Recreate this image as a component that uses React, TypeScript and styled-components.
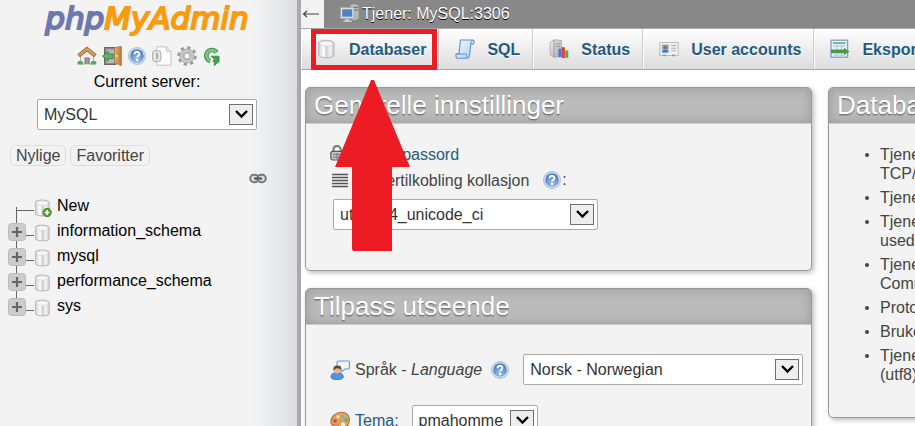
import React from 'react';
import styled, { createGlobalStyle } from 'styled-components';

const GlobalStyle = createGlobalStyle`
  *, *::before, *::after { box-sizing: border-box; }
  html, body, #root { height: 100%; }
  body {
    margin: 0;
    overflow: hidden;
    background: #fff;
    color: #444;
    font: 16px/19px "Liberation Sans", Arial, sans-serif;
  }
  a { color: #235a81; text-decoration: none; }
  h1, h2, ul, p { margin: 0; padding: 0; font-weight: normal; }
  ul { list-style: none; }
  svg { display: block; flex: none; }
`;

/* ---------- layout ---------- */

const Page = styled.div`
  display: flex;
  min-height: 100vh;
`;

const Sidebar = styled.aside`
  flex: 0 0 301px;
  padding-right: 3px;
  border-right: 4px solid #aaa;
  background: linear-gradient(to right, #f3f3f3 250px, #e9eaec 275px, #dadde1 297px);
  color: #000;
`;

const Main = styled.main`
  flex: 1;
  min-width: 0;
  height: 100vh;
  overflow: hidden;
`;

/* ---------- sidebar ---------- */

const Logo = styled.a`
  display: block;
  height: 42px;
  font: italic 31px/37px "DejaVu Sans", Verdana, sans-serif;
  text-align: center;
  color: #f89c0e;
  -webkit-text-stroke: 2px currentColor;
  text-shadow: 0 0 2px #fff, 1px 1px 1px #d8d8d8;
`;

const LogoPrefix = styled.span`
  color: #6c78af;
`;

const IconLinks = styled.nav`
  display: flex;
  justify-content: center;
  gap: 5px;
  padding: 4px 0 0 4px;
  a { display: block; }
`;

const ServerForm = styled.form`
  display: flex;
  flex-direction: column;
  align-items: center;
  gap: 8px;
  padding-top: 6px;
`;

const QuickButtons = styled.div`
  display: flex;
  gap: 4px;
  padding: 15px 0 0 10px;
`;

const QuickButton = styled.button`
  height: 21px;
  padding: 0 5px;
  border: 1px solid #ddd;
  border-radius: 5px;
  background: #f2f2f2;
  color: #444;
  font: inherit;
  line-height: 18px;
`;

const LinkToggle = styled.button`
  display: block;
  margin: 7px 27px 0 auto;
  padding: 0;
  border: 0;
  background: none;
`;

const Tree = styled.ul`
  padding: 9px 0 0 8px;
`;

const TreeRow = styled.li`
  display: flex;
  align-items: center;
  height: 25px;
  a { color: #000; margin-left: 5px; padding-bottom: 1px; }
`;

/* ---------- select ---------- */

const SelectBox = styled.span<{ $width: number }>`
  display: inline-grid;
  align-items: center;
  width: ${(p) => p.$width}px;
  height: 31px;
  select, svg { grid-area: 1 / 1; }
  select {
    appearance: none;
    width: 100%;
    height: 100%;
    padding: 0 28px 0 6px;
    border: 1px solid #aaa;
    border-radius: 2px;
    background: #fff;
    color: #333;
    font: inherit;
  }
  svg { justify-self: end; margin-right: 4px; pointer-events: none; }
`;

/* ---------- top bars ---------- */

const ServerBar = styled.header`
  display: flex;
  align-items: center;
  height: 29px;
  background: #888;
  border-bottom: 1px solid #aaa;
`;

const BackButton = styled.button`
  align-self: stretch;
  width: 23px;
  padding: 0 0 0 1px;
  border: 0;
  background: #f2f2f2;
  color: #444;
`;

const ServerLink = styled.a`
  display: flex;
  align-items: center;
  gap: 3px;
  margin-left: 16px;
  padding-bottom: 2px;
  color: #fff;
  text-shadow: 0 1px 0 #000;
`;

const TabBar = styled.nav`
  display: flex;
  height: 41px;
  border-bottom: 1px solid #aaa;
  background: linear-gradient(#fff, #dcdcdc);
`;

const Tab = styled.a`
  position: relative;
  display: flex;
  flex: none;
  align-items: center;
  gap: 12px;
  padding: 0 12px 0 15px;
  border-left: 1px solid #fff;
  border-right: 1px solid #ccc;
  font-weight: bold;
  text-shadow: 0 1px 0 #fff;
  white-space: nowrap;
`;

const Highlight = styled.span`
  position: absolute;
  z-index: 2;
  top: 0;
  left: 9px;
  width: 126px;
  height: 41px;
  border: 5px solid #ed1c24;
  pointer-events: none;
`;

const Pointer = styled.svg`
  position: absolute;
  z-index: 2;
  top: 51px;
  left: 33px;
  pointer-events: none;
`;

/* ---------- cards ---------- */

const Cards = styled.div`
  display: grid;
  grid-template-columns: minmax(507px, 3fr) minmax(320px, 2fr);
  align-items: start;
  gap: 16px;
  padding: 17px 4px;
`;

const Column = styled.div`
  display: grid;
  gap: 17px;
`;

const Card = styled.section<{ $bottom: number }>`
  overflow: hidden;
  padding-bottom: ${(p) => p.$bottom}px;
  border: 1px solid #999;
  border-radius: 5px;
  background: #f3f3f3;
  box-shadow: 2px 2px 5px #bbb;
`;

const CardTitle = styled.h2`
  height: 36px;
  padding-left: 8px;
  background: #bbb;
  box-shadow: inset 0 0 12px #999;
  border-bottom: 1px solid #ccc;
  color: #fff;
  font-size: 26px;
  line-height: 35px;
  text-shadow: 0 1px 0 #777, 0 2px 1px #999;
`;

const Settings = styled.div<{ $top: number; $gap: number }>`
  display: grid;
  gap: ${(p) => p.$gap}px;
  padding: ${(p) => p.$top}px 0 0 24px;
`;

const SettingRow = styled.div`
  display: flex;
  align-items: center;
  gap: 5px;
  min-height: 20px;
`;

const SelectRow = styled(SettingRow)`
  padding: 3px 0 0 3px;
`;

const Field = styled.span`
  display: flex;
  margin-left: 8px;
`;

const FieldLabel = styled.label`
  white-space: pre;
`;

const Help = styled.span<{ $gap: number }>`
  display: flex;
  margin-left: ${(p) => p.$gap}px;
`;

const Facts = styled.ul`
  display: grid;
  gap: 5px;
  padding: 21px 0 0 51px;
`;

const Fact = styled.li`
  position: relative;
  white-space: pre-line;
  &::before {
    content: "";
    position: absolute;
    left: -15px;
    top: 8px;
    width: 4px;
    height: 4px;
    border-radius: 50%;
    background: #444;
  }
`;

/* ---------- icons ---------- */

const GradientDefs = styled.svg`
  position: absolute;
`;

const Gradients = () => (
  <GradientDefs width="0" height="0" aria-hidden="true">
    <defs>
      <linearGradient id="cyl"><stop offset="0" stopColor="#d4d4d4" /><stop offset=".35" stopColor="#fff" /><stop offset=".5" stopColor="#ccc" /><stop offset=".75" stopColor="#f4f4f4" /><stop offset="1" stopColor="#ccc" /></linearGradient>
      <radialGradient id="help" cx=".5" cy=".75" r=".7"><stop offset="0" stopColor="#9fc4ee" /><stop offset="1" stopColor="#4677b8" /></radialGradient>
      <linearGradient id="door"><stop offset="0" stopColor="#e3b077" /><stop offset="1" stopColor="#b9793a" /></linearGradient>
      <linearGradient id="scroll" x2="1" y2="1"><stop offset="0" stopColor="#f6fbff" /><stop offset="1" stopColor="#a9cdf3" /></linearGradient>
      <linearGradient id="steel" x2="1" y2="1"><stop offset="0" stopColor="#f2f2f2" /><stop offset="1" stopColor="#a4a4a4" /></linearGradient>
    </defs>
  </GradientDefs>
);

const DbIcon = ({ size = 20, plus = false }: { size?: number; plus?: boolean }) => (
  <svg width={size} height={size} viewBox="0 0 20 20">
    <path d="M1.7 4.2C1.7 .3 16.8 .3 16.8 4.2V15.8C16.8 19.7 1.7 19.7 1.7 15.8Z" fill="url(#cyl)" stroke="#bdbdbd" strokeWidth="1.3" />
    <ellipse cx="9.3" cy="4.6" rx="6.4" ry="2.4" fill="#f7f7f7" stroke="#dedede" />
    {plus && (
      <>
        <circle cx="14.6" cy="15" r="4.6" fill="#55a432" stroke="#2f7a1c" />
        <path d="M14.6 12.3V17.7M11.9 15H17.3" stroke="#fff" strokeWidth="1.7" />
      </>
    )}
  </svg>
);

const HelpIcon = () => (
  <svg width="20" height="20" viewBox="0 0 20 20">
    <circle cx="10" cy="10" r="8.4" fill="#d5e3f5" stroke="#9fb9dc" />
    <circle cx="10" cy="10" r="6.8" fill="url(#help)" />
    <path d="M7.6 8.2C7.7 5 12.5 5.1 12.4 8C12.3 9.7 10.1 9.7 10.1 11.6" fill="none" stroke="#fff" strokeWidth="1.9" />
    <circle cx="10.1" cy="14" r="1.2" fill="#fff" />
  </svg>
);

const HomeIcon = () => (
  <svg width="20" height="20" viewBox="0 0 20 20">
    <path d="M3.5 9.5L10 4L16.5 9.5V18H3.5Z" fill="#eee" stroke="#aaa" strokeWidth=".8" />
    <path d="M8 18V12H12.2V18" fill="#999" stroke="#777" />
    <path d="M.7 16Q3 13.5 6 16V18.6H.4ZM14 16Q17 13.5 19.3 16V18.6H13.4Z" fill="#58a858" />
    <path d="M1.6 9.8L10 3L18.4 9.8" fill="none" stroke="#8e5f2e" strokeWidth="4" />
    <path d="M1.8 9.4L10 2.9L18.2 9.4" fill="none" stroke="#d29a5b" strokeWidth="2.5" />
  </svg>
);

const ExitIcon = () => (
  <svg width="20" height="20" viewBox="0 0 20 20">
    <path d="M2.5 1.5H14V18.5H2.5Z" fill="#8a8a8a" stroke="#666" />
    <path d="M4.5 3.5H12V17H4.5Z" fill="#b8b8b8" />
    <path d="M12.5 1.5L19.4 .5V19.6L12.5 17Z" fill="url(#door)" stroke="#a9703a" strokeWidth=".7" />
    <circle cx="14.6" cy="10" r=".9" fill="#fff2a0" />
    <path d="M.6 10.2L6 5.4V8H11V12.6H6V15Z" fill="#5fb66a" stroke="#2c7e3a" strokeWidth=".9" />
  </svg>
);

const DocIcon = () => (
  <svg width="20" height="20" viewBox="0 0 20 20">
    <path d="M4.5 .8H14.5L19 5.3V19.2H4.5Z" fill="#fcfcfc" stroke="#c3c3c3" />
    <path d="M14.5 .8V5.3H19" fill="#eee" stroke="#c3c3c3" />
    <rect x=".7" y="4.7" width="8.2" height="10.8" rx="2.4" fill="#e6e6e6" stroke="#ababab" />
    <path d="M4.8 7V13M5.4 7V13" stroke="#aaa" strokeWidth="1.3" />
  </svg>
);

const GearIcon = () => (
  <svg width="20" height="20" viewBox="0 0 20 20">
    <circle cx="10" cy="10" r="8" fill="none" stroke="#999" strokeWidth="3.4" strokeDasharray="3.14 3.14" />
    <circle cx="10" cy="10" r="5.4" fill="none" stroke="#ababab" strokeWidth="4.4" />
    <circle cx="10" cy="10" r="5.4" fill="none" stroke="#c9c9c9" strokeWidth="2.4" />
    <circle cx="10" cy="10" r="2.9" fill="#f3f3f3" stroke="#999" strokeWidth=".7" />
  </svg>
);

const ReloadIcon = () => (
  <svg width="20" height="20" viewBox="0 0 20 20">
    <path d="M14.6 6.6A5.6 5.6 0 1 0 8.2 15" fill="none" stroke="#3d8f4b" strokeWidth="4.6" />
    <path d="M14.3 6.4A5.4 5.4 0 1 0 8.4 14.6" fill="none" stroke="#76c482" strokeWidth="2.8" />
    <path d="M9 10.2H17V15.6L12.4 19.4V15.4H10.8L12.6 13.6Z" fill="#46a255" stroke="#2f7f3d" strokeWidth=".8" />
  </svg>
);

const ChainIcon = () => (
  <svg width="18" height="11" viewBox="0 0 18 11">
    <rect x="1.2" y="1.8" width="8.4" height="7.4" rx="3.7" fill="#ddd" stroke="#777" strokeWidth="2" />
    <rect x="8.4" y="1.8" width="8.4" height="7.4" rx="3.7" fill="#ddd" stroke="#777" strokeWidth="2" />
    <path d="M5 5.5H13" stroke="#555" strokeWidth="2.2" />
  </svg>
);

const ChevronBox = () => (
  <svg width="24" height="21" viewBox="0 0 24 21">
    <rect x=".5" y=".5" width="23" height="20" fill="#eee" stroke="#707070" />
    <path d="M7 7L12.5 12.5L18 7" fill="none" stroke="#000" strokeWidth="2.4" />
  </svg>
);

const TreeJoint = ({ first = false, last = false }: { first?: boolean; last?: boolean }) => (
  <svg width="26" height="25" viewBox="0 0 26 25">
    <path d={first ? 'M8.5 14V25' : last ? 'M8.5 0V8' : 'M8.5 0V25'} stroke="#666" />
    <path d="M8 17.5H26" stroke="#666" />
    {!first && (
      <>
        <rect x=".5" y="5.5" width="17" height="17" rx="3" fill="#ccc" stroke="#bbb" />
        <path d="M9 9V19M4 14H14" stroke="#666" strokeWidth="2.2" />
      </>
    )}
  </svg>
);

const TreeDb = styled.span`
  padding-top: 4px;
`;

const ServerIcon = () => (
  <svg width="19" height="20" viewBox="0 0 19 20">
    <path d="M10 1.5L15 .5L19 2V16L14 18L10 16Z" fill="#b9b9b9" stroke="#777" strokeWidth=".6" />
    <path d="M14 4.3H18M14 7H18" stroke="#666" />
    <circle cx="16" cy="14" r="1" fill="#7c7" />
    <rect x=".5" y="4.5" width="13.5" height="11" rx="1" fill="#ddd" stroke="#aaa" />
    <rect x="2.2" y="6.3" width="10" height="7.4" fill="#4f82c4" />
    <path d="M5.5 16H9V17.5H12V19H3.5V17.5H5.5Z" fill="#ccc" />
  </svg>
);

const SqlIcon = () => (
  <svg width="20" height="20" viewBox="0 0 20 20">
    <path d="M5.5 1H17.5Q20 1.5 18.5 5H15.8L14.5 17Q14 19.2 12 19.2H2Q.3 18 1.2 15H4Z" fill="url(#scroll)" stroke="#5d91cc" strokeWidth="1.1" />
    <path d="M15.8 5L16.3 2.5Q16.8 1.2 17.5 1M1.2 15H11.6Q11.5 18.3 12.4 19" fill="none" stroke="#5d91cc" />
  </svg>
);

const StatusIcon = () => (
  <svg width="20" height="20" viewBox="0 0 20 20">
    <path d="M1 3.5L5 .8L12.5 1.5V17L5 18.5L1 15.5Z" fill="url(#steel)" stroke="#aaa" strokeWidth=".8" />
    <path d="M5 .8V18M6.5 5H11M6.5 7.5H11" stroke="#999" />
    <rect x="9.4" y="9.8" width="3.1" height="8.4" fill="#4777e6" />
    <rect x="12.8" y="8.2" width="3.1" height="10.8" fill="#e83d32" />
    <rect x="16.2" y="11.5" width="3.1" height="7.3" fill="#4faf3d" />
  </svg>
);

const UserCardIcon = () => (
  <svg width="20" height="20" viewBox="0 0 20 20">
    <rect x=".8" y="3.5" width="18.4" height="13" fill="#f2f2f2" stroke="#bbb" />
    <rect x="2.8" y="5.5" width="7" height="8" fill="#83b6ec" />
    <circle cx="6.3" cy="8.2" r="2" fill="#a8683a" />
    <path d="M3.4 13.5Q3.5 10.8 6.3 10.8T9.3 13.5Z" fill="#3f77ba" />
    <path d="M12 6.5H17.3M12 9.2H17.3M12 11.8H17.3" stroke="#aaa" />
    <path d="M4 16.4H7M13 16.4H16" stroke="#999" strokeWidth="1.6" />
  </svg>
);

const ExportIcon = () => (
  <svg width="20" height="20" viewBox="0 0 20 20">
    <rect x="1" y="1.2" width="16.6" height="17" fill="#eaf3fd" stroke="#7c9fce" strokeWidth="1.3" />
    <path d="M3 4H15.6" stroke="#69ad5f" strokeWidth="1.6" />
    <path d="M3 7H15.6M3 16H15.6M7 5.5V17M11.5 5.5V17" stroke="#9fc0ea" />
    <path d="M1 10.5H14V8.8L19.5 12.4L14 16V14.2H1Z" fill="#4a9a45" />
  </svg>
);

const LockIcon = () => (
  <svg width="20" height="20" viewBox="0 0 20 20">
    <path d="M3.4 9V6.5C3.4 .6 10.8 .6 10.8 6.5V9" fill="none" stroke="#777" strokeWidth="2" />
    <rect x=".8" y="7.4" width="12.6" height="8.6" rx="2" fill="#c3c3cc" stroke="#556" strokeWidth="1.2" />
    <path d="M3 10.4H11.5M3 13.2H11.5M7.1 9V15" stroke="#778" />
  </svg>
);

const CollationIcon = () => (
  <svg width="20" height="20" viewBox="0 0 20 20">
    <path d="M2 4.5H18M2 7.5H18M2 10.5H18M2 13.5H18M2 16.5H18" stroke="#555" strokeWidth="1.6" />
  </svg>
);

const LanguageIcon = () => (
  <svg width="20" height="20" viewBox="0 0 20 20">
    <path d="M8.5 1H18Q19.4 1 19.4 2.5V7.5Q19.4 9 18 9H15L11 12V9H8.5Q7 9 7 7.5V2.5Q7 1 8.5 1Z" fill="#eef6ff" stroke="#6499d8" strokeWidth="1.1" />
    <path d="M1 17Q1 12.5 7 12.5T13.4 17Q12.5 19.7 7 19.7T1 17Z" fill="#4f94e8" stroke="#2c68b8" strokeWidth=".8" />
    <circle cx="7.2" cy="10" r="3.6" fill="#e8b58a" />
    <path d="M3.4 10.5Q2.6 5.6 7.5 5.6T11 10Q9 7.5 6 8.5Z" fill="#6e4527" />
  </svg>
);

const ThemeIcon = () => (
  <svg width="20" height="20" viewBox="0 0 20 20">
    <path d="M1 12C0 5 7 1.2 12 1.2C17 1.2 20 5 19.3 10C19 15 14 18.5 10.5 18C8 17.6 9.5 14.5 7.5 14C5 13.6 2 16 1 12Z" fill="#dba366" stroke="#b5713a" strokeWidth="1.1" />
    <circle cx="5" cy="10" r="1.9" fill="#e04c3a" />
    <circle cx="8" cy="5.8" r="1.7" fill="#efe49b" />
    <circle cx="13" cy="5.4" r="1.7" fill="#68b0ee" />
    <circle cx="16" cy="9" r="1.8" fill="#5cb45b" />
    <circle cx="13" cy="13.2" r="2" fill="#fff0d6" />
  </svg>
);

/* ---------- content ---------- */

const databases = ['New', 'information_schema', 'mysql', 'performance_schema', 'sys'];

const facts = [
  'Tjener: localhost via\nTCP/IP',
  'Tjenertype: MySQL',
  'Tjenertilkobling: SSL is not being\nused',
  'Tjenerversjon: 5.7.17 - MySQL\nCommunity Server (GPL)',
  'Protokollversjon: 10',
  'Bruker: root@localhost',
  'Tjenertegnsett: UTF-8 Unicode\n(utf8)',
];

type SelectProps = { id: string; width: number; value: string };

const Select = ({ id, width, value }: SelectProps) => (
  <SelectBox $width={width}>
    <select id={id} defaultValue={value}>
      <option>{value}</option>
    </select>
    <ChevronBox />
  </SelectBox>
);

export default function App() {
  return (
    <Page>
      <GlobalStyle />
      <Gradients />
      <Sidebar>
        <Logo href="#">
          <LogoPrefix>php</LogoPrefix>MyAdmin
        </Logo>
        <IconLinks>
          <a href="#" aria-label="Home"><HomeIcon /></a>
          <a href="#" aria-label="Log out"><ExitIcon /></a>
          <a href="#" aria-label="Help"><HelpIcon /></a>
          <a href="#" aria-label="Documentation"><DocIcon /></a>
          <a href="#" aria-label="Settings"><GearIcon /></a>
          <a href="#" aria-label="Reload"><ReloadIcon /></a>
        </IconLinks>
        <ServerForm>
          <label htmlFor="server">Current server:</label>
          <Select id="server" width={220} value="MySQL" />
        </ServerForm>
        <QuickButtons>
          <QuickButton>Nylige</QuickButton>
          <QuickButton>Favoritter</QuickButton>
        </QuickButtons>
        <LinkToggle aria-label="Link with main panel"><ChainIcon /></LinkToggle>
        <Tree>
          {databases.map((name, i) => (
            <TreeRow key={name}>
              <TreeJoint first={i === 0} last={i === databases.length - 1} />
              <TreeDb><DbIcon size={18} plus={i === 0} /></TreeDb>
              <a href="#">{name}</a>
            </TreeRow>
          ))}
        </Tree>
      </Sidebar>

      <Main>
        <ServerBar>
          <BackButton aria-label="Back">
            <svg width="18" height="10" viewBox="0 0 18 10">
              <path d="M1.5 5H17M5 2L1.5 5L5 8" fill="none" stroke="#444" strokeWidth="1.2" />
            </svg>
          </BackButton>
          <ServerLink href="#"><ServerIcon />Tjener: MySQL:3306</ServerLink>
        </ServerBar>
        <TabBar>
          <Tab href="#">
            <DbIcon />Databaser
            <Highlight />
            <Pointer width="76" height="172" viewBox="0 0 76 172">
              <path d="M36 0H39L75 87H57V171H18L17 169V87H0Z" fill="#ed1c24" />
            </Pointer>
          </Tab>
          <Tab href="#"><SqlIcon />SQL</Tab>
          <Tab href="#"><StatusIcon />Status</Tab>
          <Tab href="#"><UserCardIcon />User accounts</Tab>
          <Tab href="#"><ExportIcon />Eksporter</Tab>
        </TabBar>

        <Cards>
          <Column>
            <Card $bottom={40}>
              <CardTitle>Generelle innstillinger</CardTitle>
              <Settings $top={20} $gap={6}>
                <SettingRow>
                  <LockIcon />
                  <a href="#">Endre passord</a>
                </SettingRow>
                <SettingRow>
                  <CollationIcon />
                  <label htmlFor="collation">Tjenertilkobling kollasjon</label>
                  <Help $gap={8}><HelpIcon />:</Help>
                </SettingRow>
                <SelectRow>
                  <Select id="collation" width={265} value="utf8mb4_unicode_ci" />
                </SelectRow>
              </Settings>
            </Card>
            <Card $bottom={24}>
              <CardTitle>Tilpass utseende</CardTitle>
              <Settings $top={29} $gap={20}>
                <SettingRow>
                  <LanguageIcon />
                  <FieldLabel htmlFor="language">Språk - <em>Language</em></FieldLabel>
                  <Help $gap={3}><HelpIcon /></Help>
                  <Field><Select id="language" width={280} value="Norsk - Norwegian" /></Field>
                </SettingRow>
                <SettingRow>
                  <ThemeIcon />
                  <FieldLabel htmlFor="theme"><a href="#">Tema:</a></FieldLabel>
                  <Field><Select id="theme" width={126} value="pmahomme" /></Field>
                </SettingRow>
              </Settings>
            </Card>
          </Column>
          <Card $bottom={33}>
            <CardTitle>Databasetjener</CardTitle>
            <Facts>
              {facts.map((fact) => (
                <Fact key={fact}>{fact}</Fact>
              ))}
            </Facts>
          </Card>
        </Cards>
      </Main>
    </Page>
  );
}
